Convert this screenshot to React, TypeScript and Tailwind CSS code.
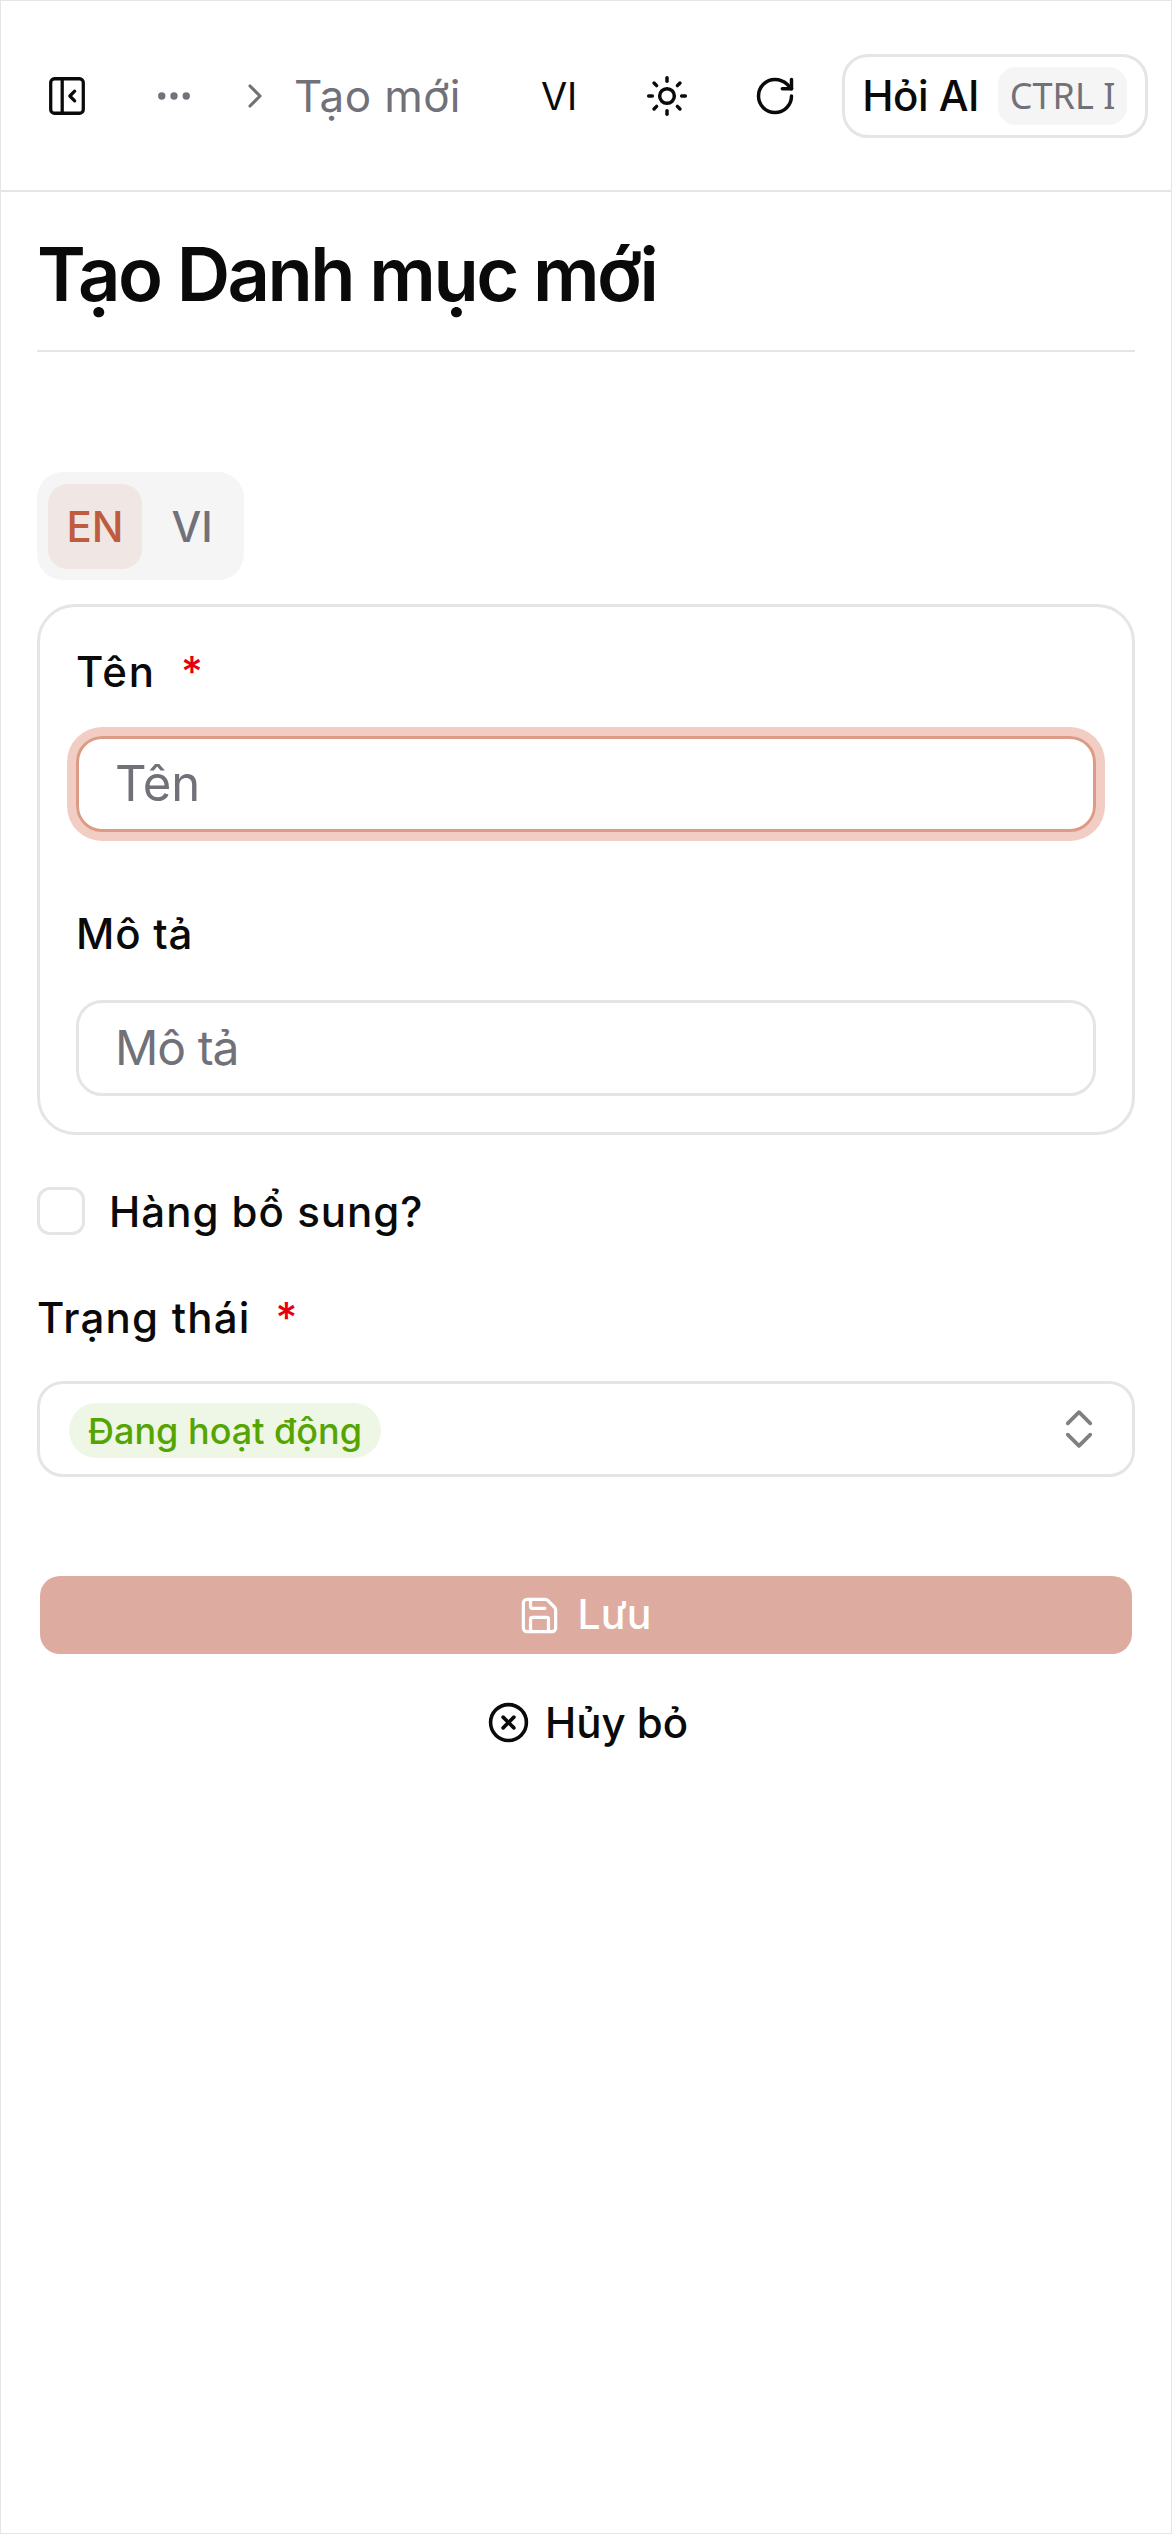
import React from "react";
import { ChevronRight, Ellipsis, Sun, RotateCw, Save, CircleX } from "lucide-react";

function PanelIcon() {
  return (
    <svg width="46" height="46" viewBox="0 0 24 24" fill="none" stroke="#0a0a0a" strokeWidth="1.7" strokeLinecap="round" strokeLinejoin="round">
      <rect x="3.5" y="3" width="17" height="18" rx="2" />
      <path d="M9.5 3v18" />
      <path d="M16 9.5 13.5 12l2.5 2.5" />
    </svg>
  );
}

function UpDown() {
  return (
    <svg width="30" height="40" viewBox="0 0 32 42" fill="none" stroke="#808080" strokeWidth="4" strokeLinecap="round" strokeLinejoin="round">
      <path d="M4 15 16 3l12 12" />
      <path d="M4 27l12 12 12-12" />
    </svg>
  );
}

function Req() {
  return <span className="ml-[25px] text-[#e7000b]">*</span>;
}

export default function App() {
  return (
    <div className="min-h-[2534px] border border-[#e5e5e5] bg-white text-[#0a0a0a] font-['Inter','Noto_Sans',sans-serif]">
      <header className="h-[191px] border-b-2 border-[#e5e5e5] flex items-center pl-[43px]">
        <PanelIcon />
        <Ellipsis className="ml-[63px] w-[42px] h-[42px] text-[#71717a]" strokeWidth={2.2} />
        <ChevronRight className="ml-[40px] w-[40px] h-[40px] text-[#71717a]" strokeWidth={1.9} />
        <span className="ml-[19px] text-[44px] leading-none text-[#71717a] font-normal tracking-[0.4px]">Tạo mới</span>
        <span className="ml-[80px] text-[38px] leading-none font-normal">VI</span>
        <Sun className="ml-[68px] w-[44px] h-[44px]" strokeWidth={1.9} />
        <RotateCw className="ml-[64px] w-[44px] h-[44px]" strokeWidth={1.9} />
        <div className="ml-[45px] h-[84px] w-[306px] rounded-[26px] border-[3px] border-[#e5e5e5] flex items-center pl-[17px] pr-[18px] justify-between">
          <span className="text-[42px] leading-none font-[450] tracking-[-0.5px]">Hỏi AI</span>
          <span className="h-[58px] px-[12px] rounded-[18px] bg-[#f5f5f5] flex items-center text-[36px] text-[#71717a] font-['Noto_Sans',sans-serif]">CTRL I</span>
        </div>
      </header>

      <main className="px-[36px]">
        <div className="border-b-2 border-[#e5e5e5] h-[160px] flex items-center pt-[6px]">
          <h1 className="text-[74px] leading-none font-semibold tracking-[-2.5px]">Tạo Danh mục mới</h1>
        </div>

        <div className="mt-[120px] w-[207px] h-[108px] rounded-[26px] bg-[#f5f5f5] p-[11px] flex items-center">
          <span className="w-[94px] h-[85px] rounded-[20px] bg-[#f0e6e4] flex items-center justify-center text-[42px] font-[450] text-[#bf5b3f]">EN</span>
          <span className="flex-1 text-center text-[42px] font-[450] text-[#71717a] pl-[9px]">VI</span>
        </div>

        <section className="mt-[24px] rounded-[38px] border-[3px] border-[#e5e5e5] px-[36px] pt-[41px] pb-[36px]">
          <label className="block text-[42px] leading-[48px] font-[450] tracking-[2px]">Tên<Req /></label>
          <div className="mt-[40px] h-[96px] rounded-[26px] border-[3px] border-[#dd9a85] ring-[9px] ring-[#f2cdc3] flex items-center pl-[36px] text-[49px] text-[#71717a]">Tên</div>
          <label className="block mt-[78px] text-[42px] leading-[48px] font-[450] tracking-[0.8px]">Mô tả</label>
          <div className="mt-[42px] h-[96px] rounded-[26px] border-[3px] border-[#e5e5e5] flex items-center pl-[36px] text-[48px] tracking-[-1px] text-[#71717a]">Mô tả</div>
        </section>

        <div className="mt-[50px] flex items-center">
          <span className="w-[48px] h-[48px] rounded-[13px] border-[3px] border-[#e5e5e5]" />
          <span className="ml-[24px] pt-[3px] text-[42px] leading-[48px] font-[450] tracking-[1px]">Hàng bổ sung?</span>
        </div>

        <label className="block mt-[58px] text-[42px] leading-[48px] font-[450] tracking-[1.2px]">Trạng thái<Req /></label>

        <div className="mt-[39px] h-[96px] rounded-[26px] border-[3px] border-[#e5e5e5] flex items-center justify-between pl-[29px] pr-[38px]">
          <span className="mt-[3px] h-[55px] px-[19px] rounded-full bg-[#eef6e5] flex items-center text-[36px] font-[450] text-[#55a500]">Đang hoạt động</span>
          <UpDown />
        </div>

        <button className="mt-[99px] mx-[3px] w-[1092px] h-[78px] rounded-[20px] bg-[#deaba0] flex items-center justify-center gap-[17px] pr-[3px] text-[41px] font-[450] text-white">
          <Save className="w-[43px] h-[43px]" strokeWidth={1.8} />
          Lưu
        </button>

        <button className="mt-[28px] w-full h-[80px] pl-[3px] flex items-center justify-center gap-[15px] text-[42px] font-[450]">
          <CircleX className="w-[43px] h-[43px]" strokeWidth={2} />
          Hủy bỏ
        </button>
      </main>
    </div>
  );
}
